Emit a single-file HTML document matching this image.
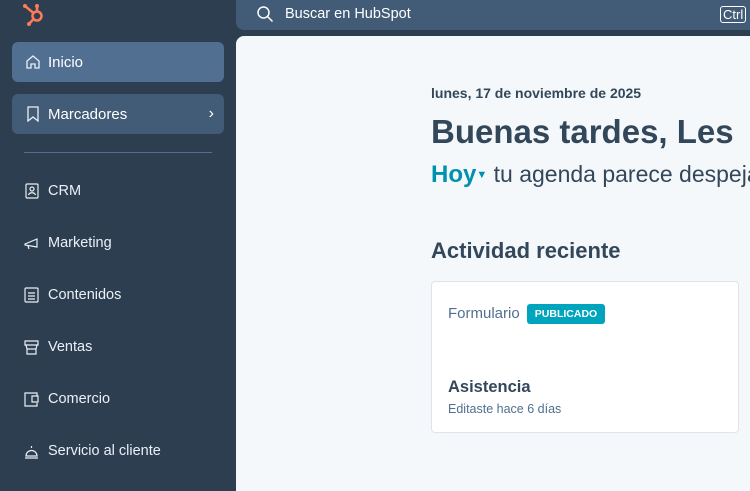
<!DOCTYPE html><html><head><style>
html,body{margin:0;width:750px;height:491px;overflow:hidden}
body{background:#2d3e50;font-family:"Liberation Sans",sans-serif;position:relative}
.a{position:absolute}
.nav{left:12px;width:212px;height:40px;border-radius:6px;color:#fff;font-size:15px;display:flex;align-items:center}
.nav span{margin-left:36px}
.it{left:24px;color:#eaf0f6;font-size:14.5px;display:flex;align-items:center;height:20px}
.it svg{margin-right:9px}
#main{position:absolute;left:236px;top:0;width:514px;height:491px;overflow:hidden}
</style></head><body>
<svg class="a" style="left:20px;top:2px" width="26" height="26" viewBox="0 0 26 26"><g stroke="#ff7a59" stroke-width="2.5" fill="none" stroke-linecap="round"><circle cx="17" cy="14" r="4.5"/><line x1="17" y1="9" x2="17" y2="4"/><line x1="13.5" y1="11" x2="5" y2="4"/><line x1="13.5" y1="17" x2="9" y2="22"/></g><circle cx="5" cy="4" r="2" fill="#ff7a59"/><circle cx="17" cy="4" r="2" fill="#ff7a59"/><circle cx="9" cy="22" r="2" fill="#ff7a59"/></svg>
<div class="a nav" style="top:42px;background:#516f90"><svg class="a" style="left:13px" width="16" height="16" viewBox="0 0 16 16" fill="none" stroke="#eaf0f6" stroke-width="1.3"><path d="M2 7L8 2l6 5v7h-4v-4H6v4H2z"/></svg><span>Inicio</span></div>
<div class="a nav" style="top:94px;background:#425b76"><svg class="a" style="left:14px" width="14" height="16" viewBox="0 0 14 16" fill="none" stroke="#eaf0f6" stroke-width="1.3"><path d="M2 1h10v14l-5-4-5 4z"/></svg><span>Marcadores</span><span style="position:absolute;right:10px;font-size:16px">›</span></div>
<div class="a" style="left:24px;top:152px;width:188px;height:1px;background:#516f90"></div>
<div class="a it" style="top:181px"><svg width="15" height="16" viewBox="0 0 15 16" fill="none" stroke="#eaf0f6" stroke-width="1.2"><rect x="2" y="1" width="12" height="14" rx="1"/><circle cx="8" cy="6" r="2"/><path d="M4.5 12c1-3 6-3 7 0"/></svg>CRM</div>
<div class="a it" style="top:233px"><svg width="15" height="16" viewBox="0 0 15 16" fill="none" stroke="#eaf0f6" stroke-width="1.2"><path d="M1 9l12-5v8L1 10z M4 11l1 3"/></svg>Marketing</div>
<div class="a it" style="top:285px"><svg width="15" height="16" viewBox="0 0 15 16" fill="none" stroke="#eaf0f6" stroke-width="1.2"><rect x="1" y="1" width="13" height="14" rx="1"/><path d="M4 6h7M4 9h7M4 12h7"/></svg>Contenidos</div>
<div class="a it" style="top:337px"><svg width="15" height="16" viewBox="0 0 15 16" fill="none" stroke="#eaf0f6" stroke-width="1.2"><path d="M1 2h13v4H1z M2 6l1 4h9l1-4 M3 10v5h9v-5"/></svg>Ventas</div>
<div class="a it" style="top:389px"><svg width="15" height="16" viewBox="0 0 15 16" fill="none" stroke="#eaf0f6" stroke-width="1.2"><path d="M13 5V2H1v13h12v-3 M8 5h6v6H8z"/></svg>Comercio</div>
<div class="a it" style="top:441px"><svg width="15" height="16" viewBox="0 0 15 16" fill="none" stroke="#eaf0f6" stroke-width="1.2"><path d="M2 13a5.5 5.5 0 0 1 11 0z M1 15h13 M7.5 5V3"/></svg>Servicio al cliente</div>
<div id="main">
<div class="a" style="left:0;top:0;width:530px;height:30px;background:#425b76;border-radius:0 0 0 8px"></div>
<svg class="a" style="left:20px;top:5px" width="18" height="18" viewBox="0 0 18 18" fill="none" stroke="#fff" stroke-width="1.5"><circle cx="7.5" cy="7.5" r="5.5"/><path d="M11.5 11.5l5 5"/></svg>
<div class="a" style="left:49px;top:6px;color:#fff;font-size:14.5px">Buscar en HubSpot</div>
<div class="a" style="left:484px;top:6px;color:#fff;font-size:13px;border:1px solid #fff;border-radius:3px;padding:0 2px;line-height:15px">Ctrl</div>
<div class="a" style="left:0;top:36px;width:530px;height:460px;background:#f5f8fa;border-radius:8px 0 0 0"></div>
<div class="a" style="left:195px;top:85px;color:#33475b;font-size:14px;font-weight:bold">lunes, 17 de noviembre de 2025</div>
<div class="a" style="left:195px;top:113px;color:#33475b;font-size:33px;font-weight:bold;white-space:nowrap">Buenas tardes, Les</div>
<div class="a" style="left:195px;top:161px;color:#33475b;font-size:23px;white-space:nowrap"><b style="color:#0091ae;font-size:24px">Hoy</b><span style="color:#0091ae;font-size:11px;vertical-align:4px">▼</span> tu agenda parece despejada</div>
<div class="a" style="left:195px;top:238px;color:#33475b;font-size:22px;font-weight:bold">Actividad reciente</div>
<div class="a" style="left:195px;top:281px;width:306px;height:150px;background:#fff;border:1px solid #dfe3eb;border-radius:4px"></div>
<div class="a" style="left:212px;top:305px;color:#516f90;font-size:15px">Formulario</div>
<div class="a" style="left:291px;top:304px;width:78px;height:20px;background:#00a4bd;border-radius:3px;color:#fff;font-size:10.5px;font-weight:bold;text-align:center;line-height:20px">PUBLICADO</div>
<div class="a" style="left:212px;top:378px;color:#33475b;font-size:16.5px;font-weight:bold">Asistencia</div>
<div class="a" style="left:212px;top:402px;color:#516f90;font-size:12.5px">Editaste hace 6 días</div>
</div>
</body></html>
